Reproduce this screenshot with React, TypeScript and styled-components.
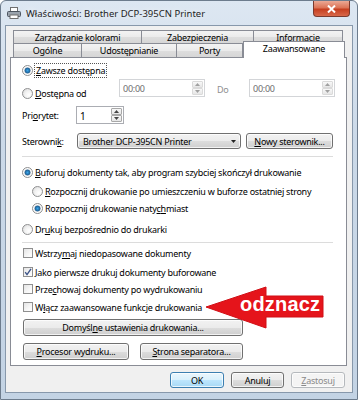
import React from 'react';
import styled, { createGlobalStyle } from 'styled-components';

const GlobalStyle = createGlobalStyle`
  html, body {
    margin: 0;
    padding: 0;
    background: #ffffff;
  }
  body {
    width: 358px;
    height: 400px;
    overflow: hidden;
    font-family: "Noto Sans", "Open Sans", sans-serif;
    font-size: 9px;
    letter-spacing: -0.25px;
    color: #000;
  }
`;

const Window = styled.div`
  position: relative;
  width: 358px;
  height: 400px;
  box-sizing: border-box;
  border: 1px solid #6d7c8d;
  border-radius: 6px 6px 0 0;
  background: linear-gradient(180deg, #dde7f2 0%, #cbd9e8 35%, #c3d3e4 100%);
  display: flex;
  flex-direction: column;
  padding: 0 4px 6px 4px;
`;

const TitleBar = styled.div`
  height: 24px;
  display: flex;
  align-items: center;
  padding-left: 2px;
`;

const TitleText = styled.span`
  margin-left: 5px;
  font-size: 9.5px;
  letter-spacing: 0;
  color: #1e1e1e;
  text-shadow: 0 0 6px rgba(255, 255, 255, 0.9);
`;

const CloseButton = styled.div`
  margin-left: auto;
  margin-right: 3px;
  align-self: flex-start;
  width: 37px;
  height: 16px;
  box-sizing: border-box;
  border: 1px solid #7a3a2e;
  border-top: none;
  border-radius: 0 0 4px 4px;
  background: linear-gradient(180deg, #eba995 0%, #dc7457 45%, #c63f20 55%, #d8684a 100%);
  display: flex;
  align-items: center;
  justify-content: center;
`;

const Body = styled.div`
  flex: 1;
  border: 1px solid #8798ab;
  background: #f0f0f0;
  padding: 4px 5px 0 4px;
  display: flex;
  flex-direction: column;
`;

const TabRow = styled.div<{ $h: number }>`
  display: flex;
  height: ${p => p.$h}px;
  margin-left: 3px;
`;

const Tab = styled.div<{ $w: number; $first?: boolean }>`
  width: ${p => p.$w}px;
  box-sizing: border-box;
  border: 1px solid #898c95;
  border-left-width: ${p => (p.$first ? 1 : 0)}px;
  border-bottom: none;
  background: linear-gradient(180deg, #f3f3f3 0%, #ebebeb 50%, #dedede 51%, #d6d6d6 100%);
  display: flex;
  align-items: center;
  justify-content: center;
  line-height: 1;
`;

const ActiveTab = styled.div`
  position: relative;
  z-index: 2;
  width: 102px;
  height: 17px;
  margin-top: -2px;
  box-sizing: border-box;
  border: 1px solid #898c95;
  border-bottom: none;
  background: #ffffff;
  display: flex;
  justify-content: center;
  padding-top: 2px;
  line-height: 1;
`;

const Panel = styled.div`
  height: 309px;
  box-sizing: border-box;
  border: 1px solid #898c95;
  background: #ffffff;
  padding: 4px 13px 0 11px;
  display: flex;
  flex-direction: column;
`;

const Row = styled.div<{ $top?: number; $h?: number; $indent?: number; $start?: boolean }>`
  display: flex;
  align-items: ${p => (p.$start ? 'flex-start' : 'center')};
  margin-top: ${p => p.$top ?? 0}px;
  height: ${p => p.$h ?? 16}px;
  margin-left: ${p => p.$indent ?? 0}px;
  white-space: nowrap;
`;

const Option = styled.div<{ $w?: number; $top?: number }>`
  display: flex;
  align-items: center;
  gap: 2px;
  height: 16px;
  width: ${p => (p.$w ? `${p.$w}px` : 'auto')};
  margin-top: ${p => p.$top ?? 0}px;
  flex: none;
`;

const Radio = styled.span<{ $on?: boolean }>`
  box-sizing: border-box;
  width: 11px;
  height: 11px;
  border-radius: 50%;
  border: 1px solid #8f9091;
  flex: none;
  background: ${p =>
    p.$on
      ? 'radial-gradient(circle, #3aa6ea 0, #1f5f93 2.6px, #ececec 3.3px, #ffffff 4px, #dcdcdc 100%)'
      : 'radial-gradient(circle at 65% 65%, #ffffff 0, #f2f2f2 45%, #d5d5d5 100%)'};
`;

const Box = styled.span`
  box-sizing: border-box;
  width: 10px;
  height: 10px;
  margin-left: 1px;
  border: 1px solid #8f8f8f;
  background: linear-gradient(135deg, #e4e4e4 0%, #f7f7f7 60%, #ffffff 100%);
  display: flex;
  align-items: center;
  justify-content: center;
  flex: none;
`;

const Focus = styled.span`
  outline: 1px dotted #555;
  outline-offset: 0;
  padding: 0 1px;
`;

const Key = styled.u`
  text-decoration: underline;
  text-underline-offset: 1px;
`;

const Label = styled.span<{ $w?: number; $muted?: boolean; $pad?: number; $top?: number }>`
  display: inline-block;
  width: ${p => (p.$w ? `${p.$w}px` : 'auto')};
  padding-left: ${p => p.$pad ?? 0}px;
  margin-top: ${p => p.$top ?? 0}px;
  color: ${p => (p.$muted ? '#8e8e8e' : '#000')};
  flex: none;
`;

const Field = styled.div<{ $w: number; $h?: number; $off?: boolean }>`
  display: flex;
  width: ${p => p.$w}px;
  height: ${p => p.$h ?? 18}px;
  box-sizing: border-box;
  border: 1px solid ${p => (p.$off ? '#d3d5d8' : '#abadb3')};
  background: #ffffff;
  flex: none;
`;

const FieldValue = styled.span<{ $off?: boolean }>`
  flex: 1;
  padding: 2px 0 0 3px;
  color: ${p => (p.$off ? '#6d6d6d' : '#000')};
  font-size: ${p => (p.$off ? 9 : 10)}px;
`;

const Spin = styled.div`
  width: 11px;
  display: flex;
  flex-direction: column;
  margin: 1px;
`;

const SpinHalf = styled.div<{ $off?: boolean }>`
  flex: 1;
  box-sizing: border-box;
  border: 1px solid ${p => (p.$off ? '#dadada' : '#a8a8a8')};
  border-radius: 1px;
  background: linear-gradient(180deg, #f8f8f8, #e6e6e6);
  display: flex;
  align-items: center;
  justify-content: center;
`;

const Button = styled.div<{ $w: number; $h?: number; $gap?: number; $default?: boolean; $off?: boolean }>`
  width: ${p => p.$w}px;
  height: ${p => p.$h ?? 17}px;
  margin-left: ${p => p.$gap ?? 0}px;
  box-sizing: border-box;
  border: 1px solid ${p => (p.$default ? '#3c7fb1' : p.$off ? '#b5b9bd' : '#707070')};
  border-radius: 3px;
  background: ${p =>
    p.$off
      ? '#f4f4f4'
      : p.$default
      ? 'linear-gradient(180deg, #eaf6fd 0%, #d9f0fc 50%, #bee6fd 51%, #a7d9f5 100%)'
      : 'linear-gradient(180deg, #f2f2f2 0%, #ebebeb 50%, #dddddd 51%, #cfcfcf 100%)'};
  box-shadow: inset 0 0 0 1px rgba(255, 255, 255, 0.75);
  color: ${p => (p.$off ? '#8a8a8a' : '#000')};
  display: flex;
  align-items: center;
  justify-content: center;
  flex: none;
  white-space: nowrap;
`;

const Select = styled(Button)`
  justify-content: space-between;
  padding: 0 4px 0 5px;
`;

const Separator = styled.div<{ $top: number }>`
  height: 1px;
  margin-top: ${p => p.$top}px;
  background: #dcdcdc;
`;

const Footer = styled.div`
  display: flex;
  justify-content: flex-end;
  gap: 7px;
  padding: 6px 2px 0 0;
`;

const Arrow = styled.svg`
  position: absolute;
  left: 204px;
  top: 285px;
`;

const ArrowText = styled.span`
  position: absolute;
  left: 239px;
  top: 293px;
  font-family: "Liberation Sans", Arial, sans-serif;
  font-weight: bold;
  font-size: 20px;
  line-height: 20px;
  color: #ffffff;
  letter-spacing: 0.2px;
`;

const Up = ({ c = '#444' }: { c?: string }) => (
  <svg width="5" height="3" viewBox="0 0 5 3">
    <path d="M0 3 L2.5 0 L5 3 Z" fill={c} />
  </svg>
);

const Down = ({ c = '#444' }: { c?: string }) => (
  <svg width="5" height="3" viewBox="0 0 5 3">
    <path d="M0 0 L5 0 L2.5 3 Z" fill={c} />
  </svg>
);

const Check = () => (
  <svg width="8" height="8" viewBox="0 0 8 8">
    <path d="M1.2 4.2 L3 6.6 L7 0.8" fill="none" stroke="#3d5488" strokeWidth="1.4" />
  </svg>
);

const PrinterIcon = () => (
  <svg width="14" height="12" viewBox="0 0 14 12">
    <rect x="3.5" y="0.5" width="7" height="4" fill="#fff" stroke="#6f6f6f" />
    <rect x="0.5" y="4.5" width="13" height="5" rx="1" fill="#9aa3ad" stroke="#4c5560" />
    <rect x="3" y="8" width="8" height="3.5" fill="#fff" stroke="#6f6f6f" />
  </svg>
);

const TimeField = () => (
  <Field $w={86} $off>
    <FieldValue $off>00:00</FieldValue>
    <Spin>
      <SpinHalf $off><Up c="#a0a0a0" /></SpinHalf>
      <SpinHalf $off><Down c="#a0a0a0" /></SpinHalf>
    </Spin>
  </Field>
);

export default function App() {
  return (
    <>
      <GlobalStyle />
      <Window>
        <TitleBar>
          <PrinterIcon />
          <TitleText>Właściwości: Brother DCP-395CN Printer</TitleText>
          <CloseButton>
            <svg width="9" height="8" viewBox="0 0 9 8">
              <path d="M1 0.5 L8 7.5 M8 0.5 L1 7.5" stroke="#ffffff" strokeWidth="2" />
            </svg>
          </CloseButton>
        </TitleBar>

        <Body>
          <TabRow $h={13}>
            <Tab $w={129} $first>Zarządzanie kolorami</Tab>
            <Tab $w={112}>Zabezpieczenia</Tab>
            <Tab $w={89}>Informacje</Tab>
          </TabRow>
          <TabRow $h={14}>
            <Tab $w={69} $first>Ogólne</Tab>
            <Tab $w={95}>Udostępnianie</Tab>
            <Tab $w={66}>Porty</Tab>
            <ActiveTab>Zaawansowane</ActiveTab>
          </TabRow>

          <Panel>
            <Row $h={17}>
              <Option>
                <Radio $on />
                <Focus><Key>Z</Key>awsze dostępna</Focus>
              </Option>
            </Row>
            <Row $h={18} $start>
              <Option $w={97} $top={6}>
                <Radio />
                <span><Key>D</Key>ostępna od</span>
              </Option>
              <TimeField />
              <Label $w={32} $muted $pad={12} $top={4}>Do</Label>
              <TimeField />
            </Row>

            <Row $h={18} $top={9}>
              <Label $w={54}>Pri<Key>o</Key>rytet:</Label>
              <Field $w={48}>
                <FieldValue>1</FieldValue>
                <Spin>
                  <SpinHalf><Up /></SpinHalf>
                  <SpinHalf><Down /></SpinHalf>
                </Spin>
              </Field>
            </Row>

            <Row $h={16} $top={9}>
              <Label $w={55}>Sterowni<Key>k</Key>:</Label>
              <Select $w={164} $h={16}>
                <span>Brother DCP-395CN Printer</span>
                <Down c="#222" />
              </Select>
              <Button $w={87} $h={16} $gap={5}>
                <span><Key>N</Key>owy sterownik...</span>
              </Button>
            </Row>

            <Separator $top={7} />

            <Row $top={7}>
              <Option>
                <Radio $on />
                <span><Key>B</Key>uforuj dokumenty tak, aby program szybciej skończył drukowanie</span>
              </Option>
            </Row>
            <Row $top={3} $indent={10}>
              <Option>
                <Radio />
                <span><Key>R</Key>ozpocznij drukowanie po umieszczeniu w buforze ostatniej strony</span>
              </Option>
            </Row>
            <Row $top={1} $indent={10}>
              <Option>
                <Radio $on />
                <span>Rozpocznij drukowanie naty<Key>c</Key><Key>h</Key>miast</span>
              </Option>
            </Row>
            <Row $top={5}>
              <Option>
                <Radio />
                <span>Dr<Key>u</Key>kuj bezpośrednio do drukarki</span>
              </Option>
            </Row>

            <Separator $top={5} />

            <Row $top={2}>
              <Option>
                <Box />
                <span>Wstrzy<Key>m</Key>aj niedopasowane dokumenty</span>
              </Option>
            </Row>
            <Row $top={3}>
              <Option>
                <Box><Check /></Box>
                <span>Jako pierwsze drukuj dokumenty buforowane</span>
              </Option>
            </Row>
            <Row $top={1}>
              <Option>
                <Box />
                <span>Prze<Key>c</Key>howaj dokumenty po wydrukowaniu</span>
              </Option>
            </Row>
            <Row $top={2}>
              <Option>
                <Box />
                <span>W<Key>ł</Key>ącz zaawansowane funkcje drukowania</span>
              </Option>
            </Row>

            <Row $top={4} $h={17}>
              <Button $w={220} $gap={1}>
                <span>Domyśl<Key>n</Key>e ustawienia drukowania...</span>
              </Button>
            </Row>
            <Row $top={7} $h={17}>
              <Button $w={106} $gap={1}>
                <span><Key>P</Key>rocesor wydruku...</span>
              </Button>
              <Button $w={103} $gap={11}>
                <span><Key>S</Key>trona separatora...</span>
              </Button>
            </Row>
          </Panel>

          <Footer>
            <Button $w={54} $h={16} $default>OK</Button>
            <Button $w={53} $h={16}>Anuluj</Button>
            <Button $w={54} $h={16} $off><span><Key>Z</Key>astosuj</span></Button>
          </Footer>
        </Body>

        <Arrow width="119" height="43" viewBox="0 0 119 43">
          <path
            d="M1 21 L61 1 L61 10 L118 10 L118 31 L61 31 L61 42 Z"
            fill="#e5141b"
            stroke="#d10f16"
            strokeWidth="1"
            strokeLinejoin="round"
          />
        </Arrow>
        <ArrowText>odznacz</ArrowText>
      </Window>
    </>
  );
}
